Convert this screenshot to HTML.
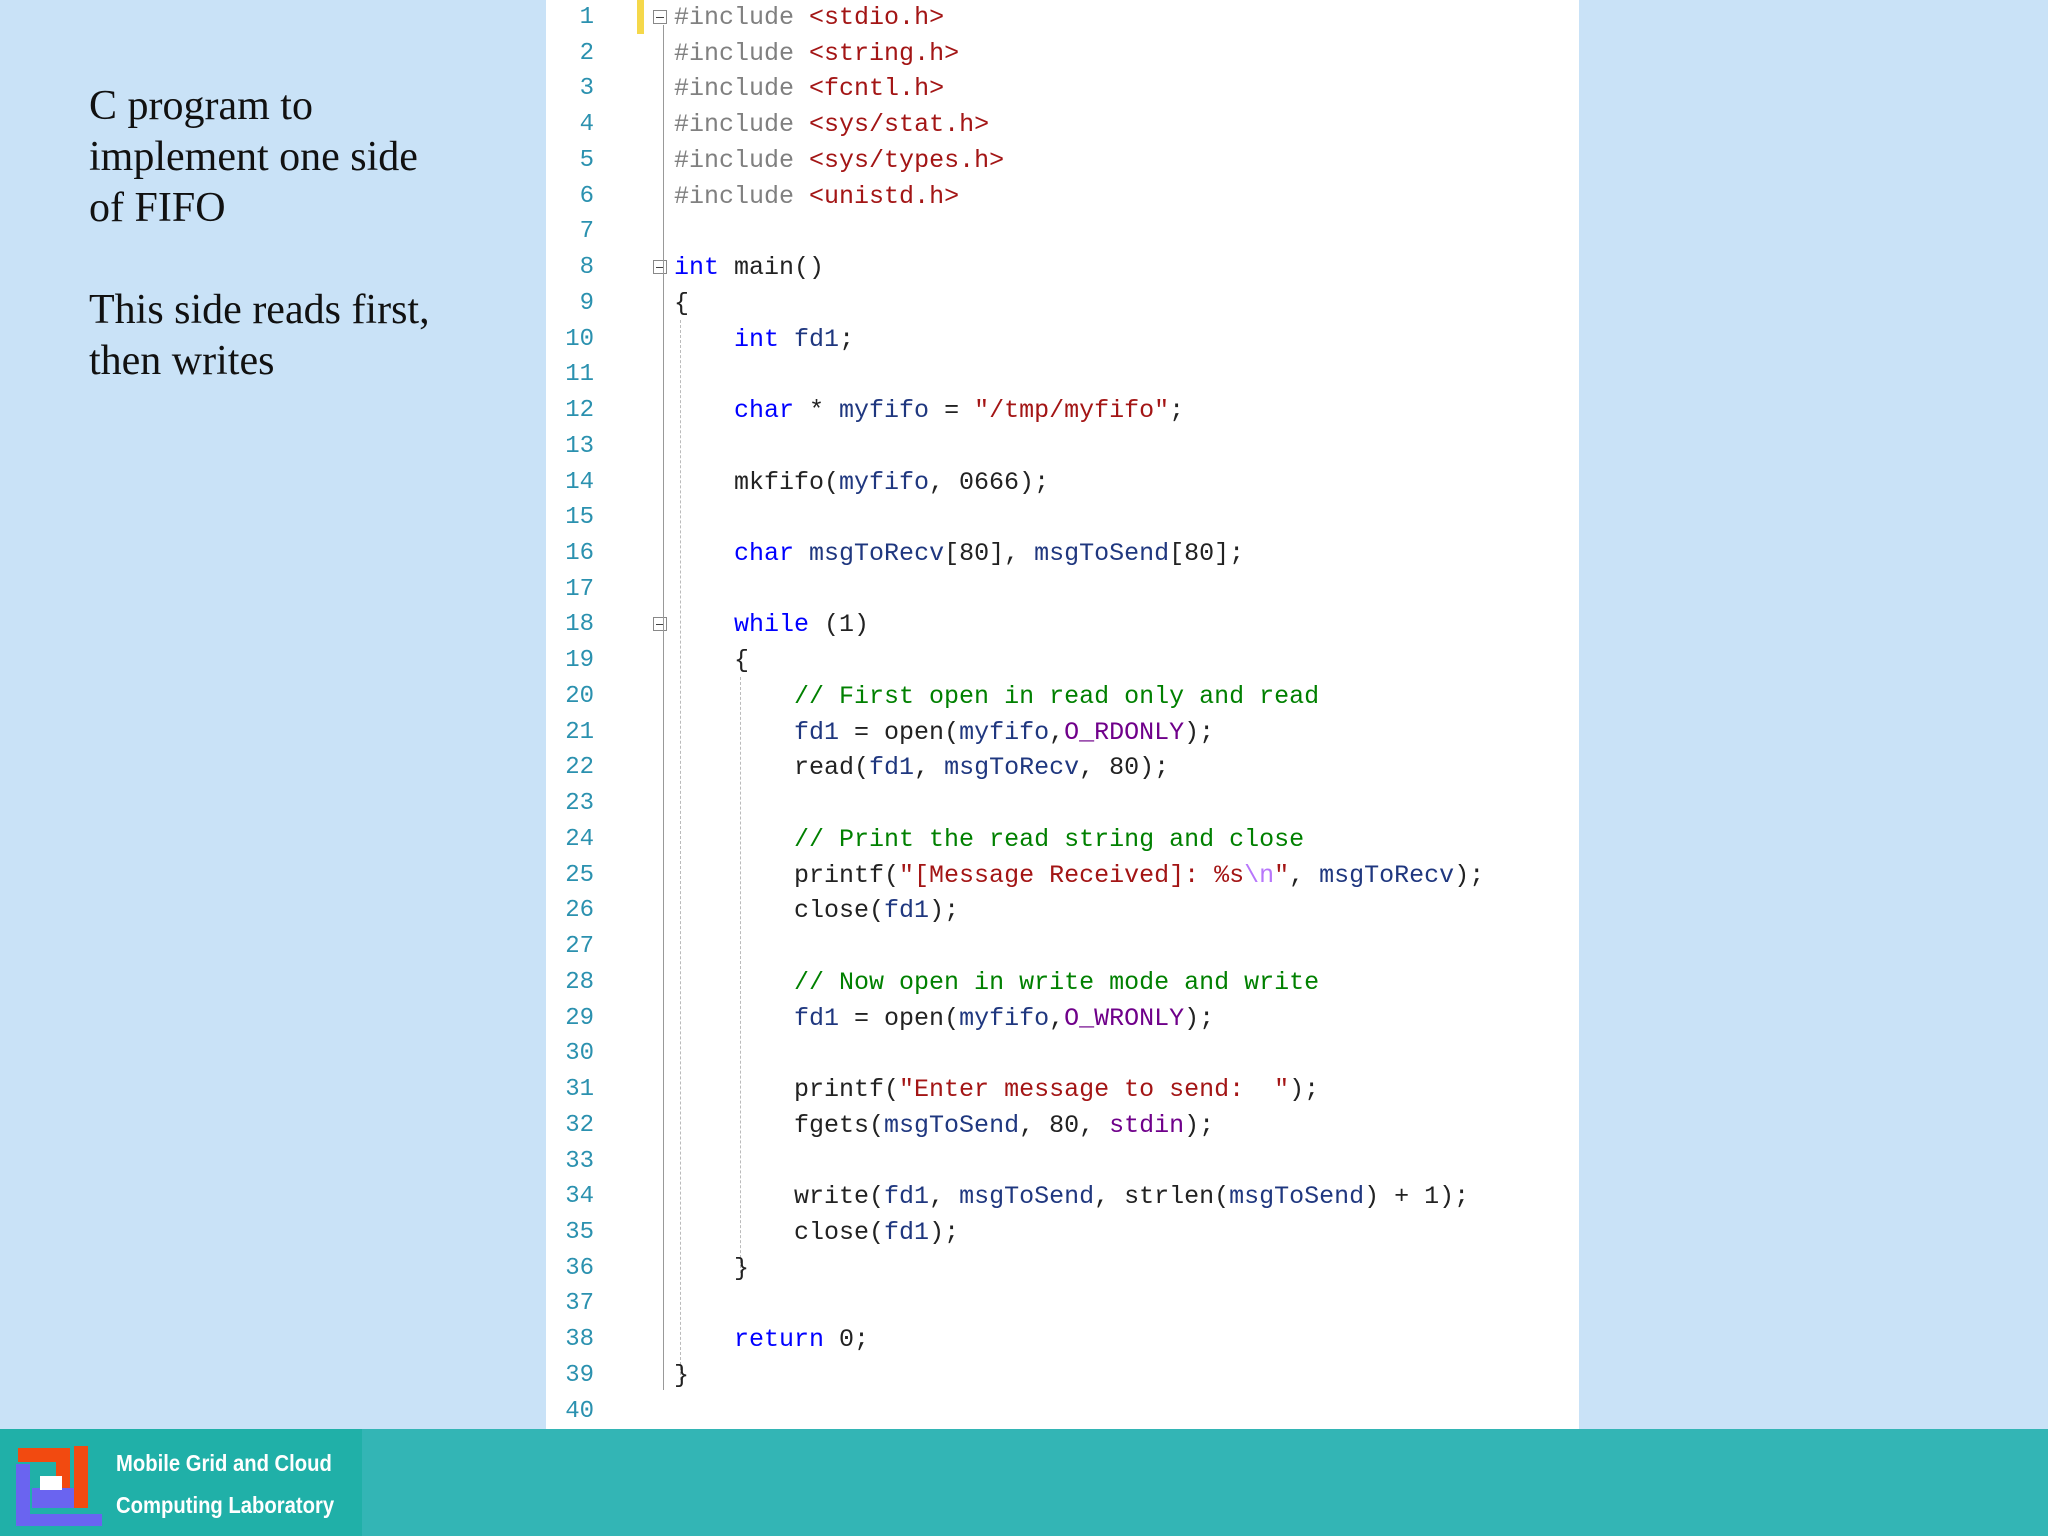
<!DOCTYPE html>
<html><head><meta charset="utf-8"><style>
body{margin:0;width:2048px;height:1536px;background:#c9e2f7;position:relative;overflow:hidden;font-family:"Liberation Sans",sans-serif}
.left{position:absolute;left:89px;top:81px;font-family:"Liberation Serif",serif;font-size:42px;line-height:51px;color:#111}
.panel{position:absolute;left:546px;top:0;width:1033px;height:1429px;background:#fff}
.ln{position:absolute;left:546px;top:0px;width:48px;text-align:right;font-family:"Liberation Mono",monospace;font-size:24px;line-height:35.74px;color:#2b91af;white-space:pre}
.c{position:absolute;left:674px;top:0px;font-family:"Liberation Mono",monospace;font-size:25px;line-height:35.74px;white-space:pre;color:#222}
.k{color:#0000ff}.p{color:#808080}.s{color:#a31515}.g{color:#008000}.v{color:#1f377f}.m{color:#6f008a}.e{color:#b776fb}
.fold{position:absolute;left:653px;width:14px;height:14px;border:1px solid #888;background:#fff;box-sizing:border-box}
.fold:after{content:"";position:absolute;left:2px;right:2px;top:6px;height:1px;background:#444}
.vl{position:absolute;width:1px;background:#999}
.dl{position:absolute;width:0;border-left:1px dashed #bbb}
.footer{position:absolute;left:0;top:1429px;width:2048px;height:107px;background:#33b5b5}
.fl{position:absolute;left:0;top:0;width:362px;height:107px;background:#20b0a8}
.ft{position:absolute;left:116px;color:#fff;font-size:23px;font-weight:bold;white-space:nowrap;transform:scaleX(0.88);transform-origin:0 0}
</style></head><body>
<div class="left">C program to<br>implement one side<br>of FIFO<br><br>This side reads first,<br>then writes</div>
<div class="panel"></div>
<div style="position:absolute;left:637px;top:0;width:7px;height:34px;background:#f5d84a"></div>
<div class="fold" style="top:10px"></div>
<div class="fold" style="top:260px"></div>
<div class="fold" style="top:617px"></div>
<div class="vl" style="left:663px;top:25px;height:262px"></div>
<div class="vl" style="left:663px;top:274px;height:1116px"></div>
<div class="dl" style="left:680px;top:320px;height:1060px"></div>
<div class="dl" style="left:740px;top:677px;height:596px"></div>
<div class="ln">1
2
3
4
5
6
7
8
9
10
11
12
13
14
15
16
17
18
19
20
21
22
23
24
25
26
27
28
29
30
31
32
33
34
35
36
37
38
39
40</div>
<div class="c"><span class="p">#include</span> <span class="s">&lt;stdio.h&gt;</span>
<span class="p">#include</span> <span class="s">&lt;string.h&gt;</span>
<span class="p">#include</span> <span class="s">&lt;fcntl.h&gt;</span>
<span class="p">#include</span> <span class="s">&lt;sys/stat.h&gt;</span>
<span class="p">#include</span> <span class="s">&lt;sys/types.h&gt;</span>
<span class="p">#include</span> <span class="s">&lt;unistd.h&gt;</span>

<span class="k">int</span> main()
{
    <span class="k">int</span> <span class="v">fd1</span>;

    <span class="k">char</span> * <span class="v">myfifo</span> = <span class="s">"/tmp/myfifo"</span>;

    mkfifo(<span class="v">myfifo</span>, 0666);

    <span class="k">char</span> <span class="v">msgToRecv</span>[80], <span class="v">msgToSend</span>[80];

    <span class="k">while</span> (1)
    {
        <span class="g">// First open in read only and read</span>
        <span class="v">fd1</span> = open(<span class="v">myfifo</span>,<span class="m">O_RDONLY</span>);
        read(<span class="v">fd1</span>, <span class="v">msgToRecv</span>, 80);

        <span class="g">// Print the read string and close</span>
        printf(<span class="s">"[Message Received]: %s</span><span class="e">\n</span><span class="s">"</span>, <span class="v">msgToRecv</span>);
        close(<span class="v">fd1</span>);

        <span class="g">// Now open in write mode and write</span>
        <span class="v">fd1</span> = open(<span class="v">myfifo</span>,<span class="m">O_WRONLY</span>);

        printf(<span class="s">"Enter message to send:  "</span>);
        fgets(<span class="v">msgToSend</span>, 80, <span class="m">stdin</span>);

        write(<span class="v">fd1</span>, <span class="v">msgToSend</span>, strlen(<span class="v">msgToSend</span>) + 1);
        close(<span class="v">fd1</span>);
    }

    <span class="k">return</span> 0;
}
</div>
<div class="footer"><div class="fl">
<svg style="position:absolute;left:16px;top:17px" width="86" height="80" viewBox="0 0 86 80">
<rect x="0" y="18" width="14" height="62" fill="#6a64f0"/>
<rect x="0" y="68" width="86" height="12" fill="#6a64f0"/>
<rect x="16" y="42" width="42" height="20" fill="#6a64f0"/>
<rect x="2" y="2" width="50" height="14" fill="#f24a10"/>
<rect x="40" y="2" width="14" height="40" fill="#f24a10"/>
<rect x="58" y="0" width="14" height="62" fill="#f24a10"/>
<rect x="24" y="30" width="22" height="14" fill="#fff"/>
</svg>
<div class="ft" style="top:21px">Mobile Grid and Cloud</div>
<div class="ft" style="top:63px">Computing Laboratory</div>
</div></div>
</body></html>
